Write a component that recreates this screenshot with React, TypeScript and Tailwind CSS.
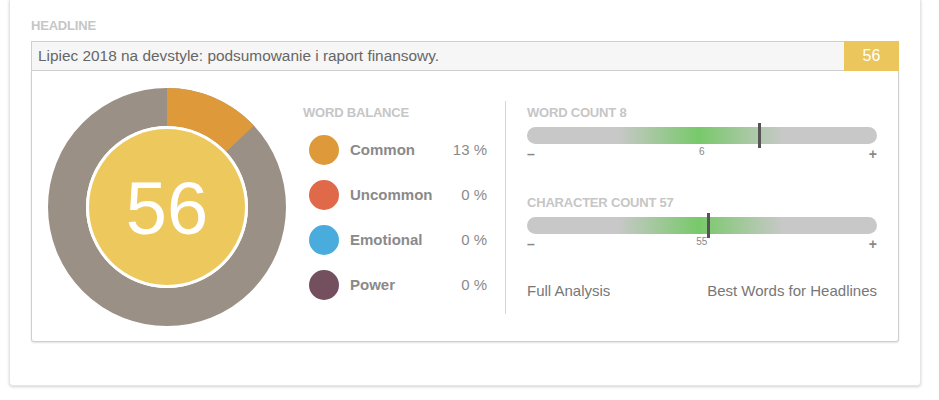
const balance = [
  { label: 'Common', value: '13 %', color: 'bg-[#de9a3a]' },
  { label: 'Uncommon', value: '0 %', color: 'bg-[#e0694a]' },
  { label: 'Emotional', value: '0 %', color: 'bg-[#4aacdc]' },
  { label: 'Power', value: '0 %', color: 'bg-[#74505f]' },
];

function Donut() {
  const r = 100;
  const c = 2 * Math.PI * r;
  const part = c * 0.13;
  return (
    <svg width="238" height="238" viewBox="0 0 238 238" className="shrink-0">
      <circle cx="119" cy="119" r={r} fill="none" stroke="#9b9086" strokeWidth="38" />
      <circle
        cx="119"
        cy="119"
        r={r}
        fill="none"
        stroke="#de9a3a"
        strokeWidth="38"
        strokeDasharray={`${part} ${c}`}
        transform="rotate(-90 119 119)"
      />
      <circle cx="119" cy="119" r="81" fill="#ffffff" />
      <circle cx="119" cy="119" r="78" fill="#edc95d" />
      <text
        x="119"
        y="120"
        textAnchor="middle"
        dominantBaseline="central"
        fill="#ffffff"
        fontSize="74"
        fontFamily="'Liberation Sans', Arial, sans-serif"
      >
        56
      </text>
    </svg>
  );
}

function CountBar({ title, ideal, marker }: { title: string; ideal: string; marker: number }) {
  return (
    <div>
      <div className="text-[13px] font-bold text-[#c6c6c6] leading-none tracking-[-0.2px]">{title}</div>
      <div className="relative mt-[8px] h-[17px] rounded-full bg-[linear-gradient(to_right,#c8c8c8_0%,#c8c8c8_26%,#78c96a_49%,#c8c8c8_73%,#c8c8c8_100%)]">
        <div
          className="absolute top-[-4px] h-[25px] w-[3px] bg-[#555]"
          style={{ left: `${marker}%` }}
        />
      </div>
      <div className="flex justify-between items-start text-[#888] leading-none mt-[3px]">
        <span className="text-[14px] font-bold">–</span>
        <span className="text-[10px]">{ideal}</span>
        <span className="text-[14px] font-bold">+</span>
      </div>
    </div>
  );
}

export default function App() {
  return (
    <div className="w-[939px] h-[400px] bg-white font-['Liberation_Sans',Arial,sans-serif]">
      <div className="ml-[9px] w-[912px] h-[386px] bg-white rounded-b-[4px] border border-t-0 border-[#e6e6e6] shadow-[0_1px_3px_rgba(0,0,0,0.18)] pt-[19px] px-[21px]">
        <div className="text-[13px] font-bold text-[#c6c6c6] leading-none tracking-[-0.2px]">HEADLINE</div>
        <div className="mt-[9px] flex h-[30px] border border-[#cfcfcf] bg-[#f6f6f6]">
          <div className="flex-1 flex items-center pl-[6px] text-[15.4px] text-[#666]">
            Lipiec 2018 na devstyle: podsumowanie i raport finansowy.
          </div>
          <div className="w-[55px] -my-px -mr-px flex items-center justify-center bg-[#eac65c] text-white text-[16px]">
            56
          </div>
        </div>
        <div className="h-[271px] border border-t-0 border-[#cfcfcf] rounded-b-[3px] shadow-[0_1px_2px_rgba(0,0,0,0.12)] flex pl-[16px] pt-[17px]">
          <Donut />
          <div className="ml-[17px] w-[184px] pt-[18px]">
            <div className="text-[13px] font-bold text-[#c6c6c6] leading-none tracking-[-0.2px]">WORD BALANCE</div>
            <div className="mt-[16px] flex flex-col gap-[15px]">
              {balance.map((b) => (
                <div key={b.label} className="flex items-center h-[30px]">
                  <div className={`ml-[6px] w-[30px] h-[30px] rounded-full ${b.color}`} />
                  <div className="ml-[11px] flex-1 text-[15px] font-bold text-[#8a8a8a]">{b.label}</div>
                  <div className="text-[15px] text-[#8a8a8a]">{b.value}</div>
                </div>
              ))}
            </div>
          </div>
          <div className="ml-[18px] mt-[13px] h-[213px] w-px bg-[#d6d6d6]" />
          <div className="ml-[21px] w-[350px] pt-[18px]">
            <CountBar title="WORD COUNT 8" ideal="6" marker={66} />
            <div className="mt-[35px]">
              <CountBar title="CHARACTER COUNT 57" ideal="55" marker={51.4} />
            </div>
            <div className="mt-[29px] flex justify-between text-[15px] text-[#777]">
              <span>Full Analysis</span>
              <span>Best Words for Headlines</span>
            </div>
          </div>
        </div>
      </div>
    </div>
  );
}
